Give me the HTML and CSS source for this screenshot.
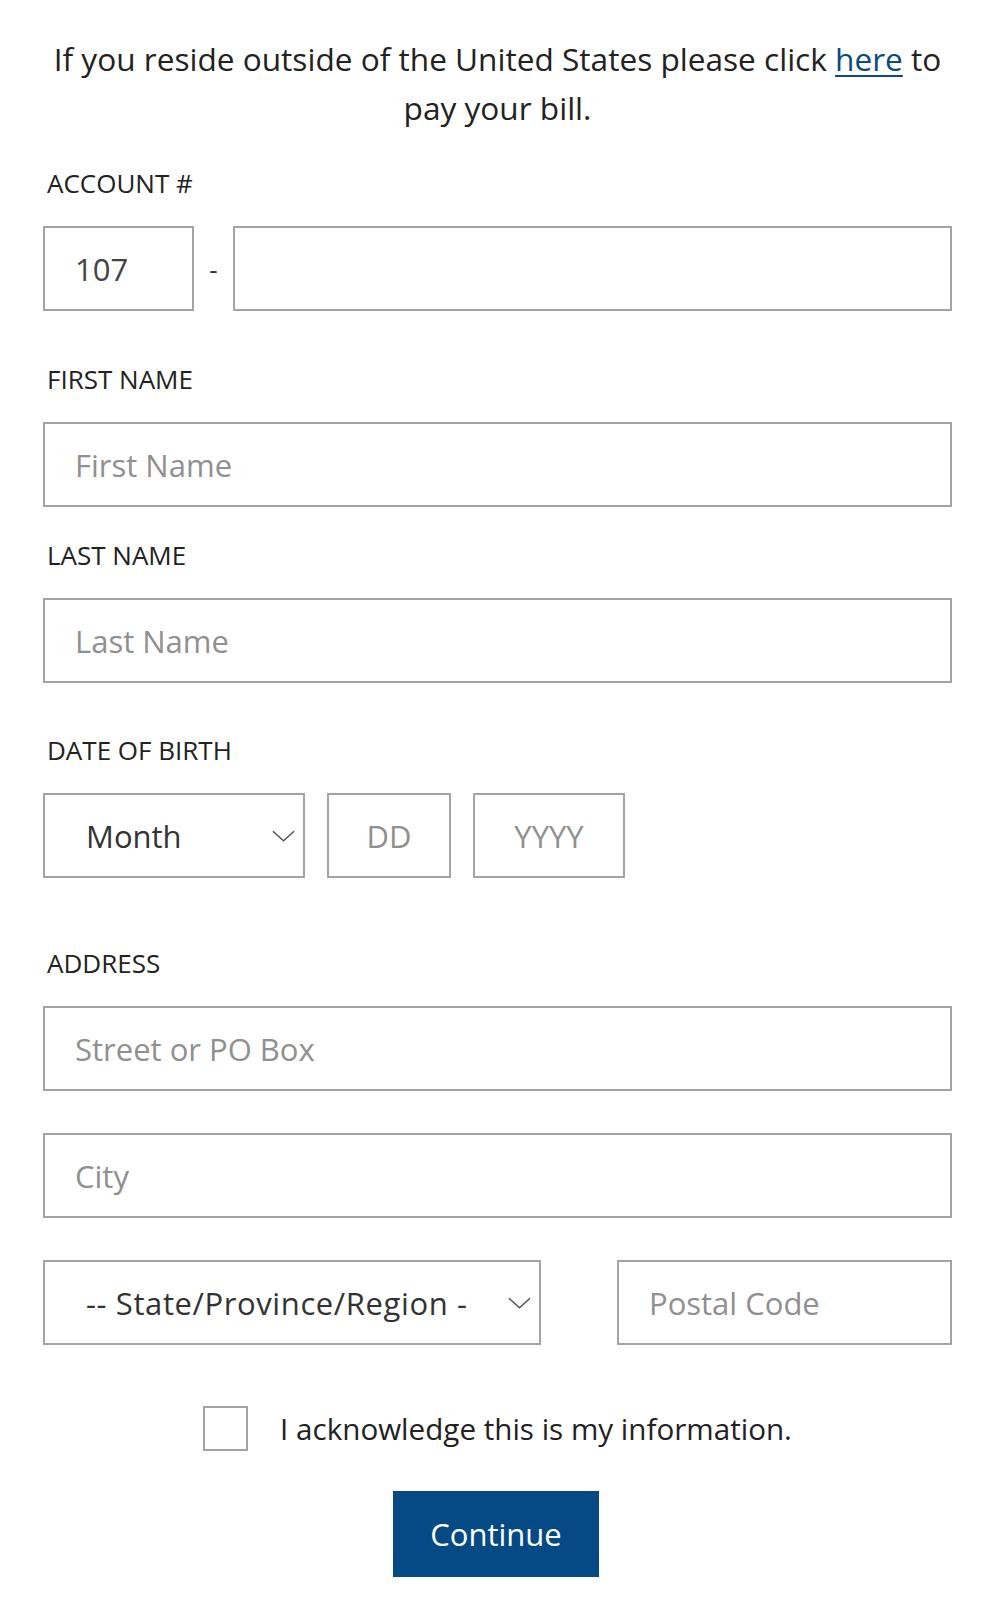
FILE: index.html
```html
<!DOCTYPE html>
<html lang="en">
	<head>
		<meta charset="UTF-8">
		<meta content="width=device-width, initial-scale=1.0" name="viewport">
		<link rel="stylesheet" href="styles.css">
		<title>Pay Your Bill</title>
	</head>
	<body>
		<div class="page">
			<p class="intro">If you reside outside of the United States please click <a href="#">here</a> to pay your bill.</p>

			<form id="bill-form">
				<div class="field field-account">
					<label for="accountNumber">ACCOUNT #</label>
					<div class="row">
						<input class="prefix" id="accountPrefix" type="text" value="107" readonly>
						<span class="dash">-</span>
						<input class="grow" id="accountNumber" type="text">
					</div>
				</div>

				<div class="field field-first">
					<label for="firstName">FIRST NAME</label>
					<input id="firstName" placeholder="First Name" type="text">
				</div>

				<div class="field field-last">
					<label for="lastName">LAST NAME</label>
					<input id="lastName" placeholder="Last Name" type="text">
				</div>

				<div class="field field-dob">
					<label for="birthMonth">DATE OF BIRTH</label>
					<div class="row row-dob">
						<div class="select-wrap month">
							<select id="birthMonth">
								<option>Month</option>
							</select>
							<svg class="chevron" viewBox="0 0 24 12"><path d="M1 1 L12 11 L23 1" /></svg>
						</div>
						<input class="day" placeholder="DD" type="text">
						<input class="year" placeholder="YYYY" type="text">
					</div>
				</div>

				<div class="field field-address">
					<label for="street">ADDRESS</label>
					<input id="street" placeholder="Street or PO Box" type="text">
					<input class="city" placeholder="City" type="text">
					<div class="row row-state">
						<div class="select-wrap state">
							<select>
								<option>-- State/Province/Region -</option>
							</select>
							<svg class="chevron" viewBox="0 0 24 12"><path d="M1 1 L12 11 L23 1" /></svg>
						</div>
						<input class="postal" placeholder="Postal Code" type="text">
					</div>
				</div>

				<div class="acknowledge">
					<span class="box"></span>
					<span class="ack-text">I acknowledge this is my information.</span>
				</div>

				<div class="actions">
					<button type="button">Continue</button>
				</div>
			</form>
		</div>
	</body>
</html>
```

FILE: styles.css
```css
body {
    margin: 0;
    background-color: #FFF;
    font-family: 'Open Sans', 'Noto Sans', sans-serif;
    color: #222;
}

.page {
    padding: 34px 42px 0 43px;
}

.intro {
    margin: 0;
    text-align: center;
    font-size: 31.6px;
    line-height: 49px;
}

.intro a {
    color: #0B4A80;
    text-decoration: underline;
    text-decoration-thickness: 2px;
    text-underline-offset: 4px;
}

form {
    display: flex;
    flex-direction: column;
    margin-top: 34px;
}

label {
    display: block;
    height: 34px;
    line-height: 34px;
    margin: 0 0 26px 4px;
    font-size: 26px;
    color: #222;
}

input,
select {
    box-sizing: border-box;
    height: 85px;
    width: 100%;
    margin: 0;
    padding: 0 30px;
    border: 2px solid #A3A3A3;
    border-radius: 0;
    background-color: #FFF;
    font-family: inherit;
    font-size: 31px;
    color: #444;
    outline: none;
}

input::placeholder {
    color: #909090;
}

.field-account {
    margin-bottom: 51px;
}

.field-first {
    margin-bottom: 31px;
}

.field-last {
    margin-bottom: 50px;
}

.field-dob {
    margin-bottom: 68px;
}

.field-address {
    display: flex;
    flex-direction: column;
    gap: 42px;
}

.field-address label {
    margin-bottom: -16px;
}

.row {
    display: flex;
    align-items: center;
}

input.prefix {
    width: 151px;
    flex: none;
}

.dash {
    width: 39px;
    text-align: center;
    font-size: 26px;
    color: #333;
}

input.grow {
    flex: 1;
}

.row-dob {
    gap: 22px;
}

.select-wrap {
    position: relative;
    flex: none;
}

.select-wrap select {
    appearance: none;
    -webkit-appearance: none;
    padding-left: 41px;
    color: #333;
}

.chevron {
    position: absolute;
    top: 50%;
    width: 23px;
    height: 12px;
    margin-top: -6px;
    fill: none;
    stroke: #555;
    stroke-width: 1.6;
    pointer-events: none;
}

.select-wrap.month {
    width: 262px;
}

.month .chevron {
    right: 10px;
}

input.day {
    width: 124px;
    padding: 0;
    text-align: center;
}

input.year {
    width: 152px;
    padding: 0;
    text-align: center;
}

.row-state {
    justify-content: space-between;
}

.select-wrap.state {
    width: 498px;
}

.state select {
    letter-spacing: 0.6px;
}

.state .chevron {
    right: 10px;
}

input.postal {
    width: 335px;
    flex: none;
}

.acknowledge {
    display: flex;
    align-items: center;
    justify-content: center;
    margin-top: 61px;
}

.box {
    box-sizing: border-box;
    width: 45px;
    height: 45px;
    border: 2px solid #A3A3A3;
    margin-right: 32px;
}

.ack-text {
    font-size: 29.6px;
    color: #222;
}

.actions {
    display: flex;
    justify-content: center;
    margin-top: 40px;
    padding-right: 3px;
}

button {
    width: 206px;
    height: 86px;
    background-color: #054A85;
    color: #FFF;
    border: none;
    border-radius: 0;
    font-family: inherit;
    font-size: 31px;
    cursor: pointer;
}
```
